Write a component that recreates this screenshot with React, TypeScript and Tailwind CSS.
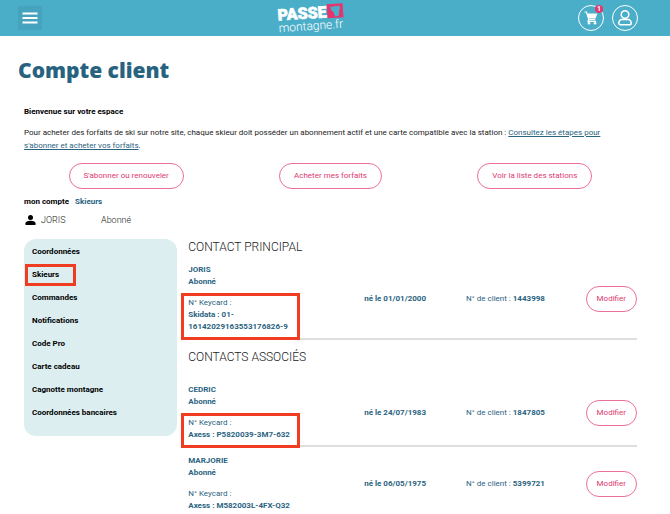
import type { ReactNode } from "react";

type Contact = {
  name: string;
  status: string;
  card: string;
  birth: string;
  client: string;
  framed: boolean;
};

const menu = [
  "Coordonnées",
  "Skieurs",
  "Commandes",
  "Notifications",
  "Code Pro",
  "Carte cadeau",
  "Cagnotte montagne",
  "Coordonnées bancaires",
];

const actions = ["S'abonner ou renouveler", "Acheter mes forfaits", "Voir la liste des stations"];

const mainContact: Contact = {
  name: "JORIS",
  status: "Abonné",
  card: "Skidata : 01-16142029163553176826-9",
  birth: "01/01/2000",
  client: "1443998",
  framed: true,
};

const linkedContacts: Contact[] = [
  {
    name: "CEDRIC",
    status: "Abonné",
    card: "Axess : P5820039-3M7-632",
    birth: "24/07/1983",
    client: "1847805",
    framed: true,
  },
  {
    name: "MARJORIE",
    status: "Abonné",
    card: "Axess : M582003L-4FX-Q32",
    birth: "06/05/1975",
    client: "5399721",
    framed: false,
  },
];

function Logo() {
  return (
    <svg width="70" height="34" viewBox="0 0 70 34" role="img" aria-label="PASSE montagne.fr">
      <g transform="rotate(-4 35 17)">
        <path d="M52.500 4.500h16v14h-16z" fill="#e5356f" />
        <path d="M56 7l2.500.6 1.500-.8 2 .3 2.500-.6 1.500 3-1.500 1.500v3l-1 3h-3.500l-1-4-2.500-2.500z" fill="#4baec9" />
        <text x="3" y="17.5" fill="#fff" stroke="#fff" strokeWidth="0.6" fontFamily="Roboto, sans-serif" fontWeight="900" fontSize="16">
          PASSE
        </text>
        <text x="3" y="29" fill="#fff" fontFamily="Roboto, sans-serif" fontWeight="300" fontSize="12">
          montagne.fr
        </text>
      </g>
    </svg>
  );
}

function CartIcon() {
  return (
    <svg width="14" height="14" viewBox="0 0 14 14" fill="none" aria-hidden="true">
      <path d="M0.5 1h2l2.3 7.6h6.4" stroke="#fff" strokeWidth="1.2" />
      <path d="M3 2.4h10.4l-1.9 5H4.6z" fill="#fff" />
      <path d="M4.8 8.4L4 10.3h8" stroke="#fff" strokeWidth="1.2" />
      <circle cx="5" cy="12.3" r="1.3" fill="#fff" />
      <circle cx="11" cy="12.3" r="1.3" fill="#fff" />
    </svg>
  );
}

function UserIcon() {
  return (
    <svg width="16" height="18" viewBox="0 0 16 18" fill="none" stroke="#fff" strokeWidth="1.5" aria-hidden="true">
      <circle cx="8" cy="5.5" r="3.8" />
      <path d="M4.6 10.6h6.8c1.6 0 2.8 1.6 2.8 3.3 0 1.1-.7 1.9-1.7 1.9h-9c-1 0-1.7-.8-1.7-1.9 0-1.7 1.2-3.3 2.8-3.3z" />
    </svg>
  );
}

function PillButton({ small, children }: { small?: boolean; children: ReactNode }) {
  return (
    <button
      type="button"
      className={`h-[26px] rounded-full border border-[#ec6f99] text-[#dd3a70] ${small ? "px-2.5" : "px-3.5"}`}
    >
      {children}
    </button>
  );
}

// Red frame laid over an item to point it out
function Frame({ className }: { className: string }) {
  return <span className={`pointer-events-none absolute border-3 border-[#f03c20] ${className}`} />;
}

function ContactRow({ contact }: { contact: Contact }) {
  return (
    <div className="grid grid-cols-[176fr_102fr_100fr_71fr] items-center text-[#2a637f]">
      <div className="w-28">
        <p className="font-bold">{contact.name}</p>
        <p className="font-bold">{contact.status}</p>
        <div className="relative mt-[9px]">
          <p>N° Keycard :</p>
          <p className="font-bold">{contact.card}</p>
          {contact.framed && <Frame className="-top-1 right-0 -bottom-[7px] -left-[7px]" />}
        </div>
      </div>
      <p className="font-bold">né le {contact.birth}</p>
      <p>
        N° de client : <b>{contact.client}</b>
      </p>
      <div className="text-right">
        <PillButton small>Modifier</PillButton>
      </div>
    </div>
  );
}

export default function App() {
  return (
    <div className="bg-white font-['Roboto',sans-serif] text-[8px] leading-3 text-[#222]">
      <header className="flex h-9 items-center justify-between bg-[#4baec9] pr-8 pl-[18px]">
        <button type="button" aria-label="Menu" className="flex size-6 items-center justify-center bg-[#46a3bd]">
          <svg width="16" height="12" viewBox="0 0 16 12" fill="#fff" aria-hidden="true">
            <path d="M0.5 0.5h15v2h-15zM0.5 5h15v2h-15zM0.5 9.5h15v2h-15z" />
          </svg>
        </button>
        <a href="#">
          <Logo />
        </a>
        <div className="flex gap-2">
          <a href="#" aria-label="Panier" className="relative flex size-[26px] items-center justify-center rounded-full border border-white">
            <CartIcon />
            <span className="absolute -top-px right-0 size-2 rounded-full bg-[#e5356f] text-center text-[7px] leading-2 font-bold text-white">
              1
            </span>
          </a>
          <a href="#" aria-label="Mon compte" className="flex size-[26px] items-center justify-center rounded-full border border-white">
            <UserIcon />
          </a>
        </div>
      </header>

      <h1 className="px-[18px] pt-5 font-['Noto_Sans',sans-serif] text-[21px] leading-7 font-black text-[#27637f]">
        Compte client
      </h1>

      <main className="pt-[22px] pr-[33px] pl-6">
        <p className="font-bold text-black">Bienvenue sur votre espace</p>
        <p className="mt-2 pr-4 leading-[13px]">
          Pour acheter des forfaits de ski sur notre site, chaque skieur doit posséder un abonnement actif et une carte
          compatible avec la station :{" "}
          <a href="#" className="text-[#2a637f] underline">
            Consultez les étapes pour s'abonner et acheter vos forfaits
          </a>
          .
        </p>

        <div className="mt-[11px] grid grid-cols-3 justify-items-center">
          {actions.map((label) => (
            <PillButton key={label}>{label}</PillButton>
          ))}
        </div>

        <p className="mt-[7px] flex gap-1.5 font-bold text-black">
          mon compte
          <a href="#" className="text-[#2a637f]">
            Skieurs
          </a>
        </p>
        <div className="mt-1.5 flex items-center text-[9px] font-light">
          <svg width="13" height="12" viewBox="0 0 13 12" aria-hidden="true">
            <circle cx="6.5" cy="3.5" r="2.5" />
            <path d="M1.500 11V9.300c0-1.800 3.300-2.500 5-2.500s5 .7 5 2.500V11z" />
          </svg>
          <span className="ml-1 w-[60px]">JORIS</span>
          <span>Abonné</span>
        </div>

        <div className="mt-[13px] flex items-start gap-[11px]">
          <nav className="flex h-[197px] w-1/4 flex-col rounded-xl bg-[#dceef0] px-2 pt-px pb-[11px] font-bold text-black">
            {menu.map((item) => (
              <a key={item} href="#" className="flex flex-1 items-center">
                <span className="relative">
                  {item}
                  {item === "Skieurs" && <Frame className="-top-[5px] -right-[17px] -bottom-[5px] -left-[7px]" />}
                </span>
              </a>
            ))}
          </nav>

          <div className="flex-1">
            <h2 className="text-xs leading-4 font-light">CONTACT PRINCIPAL</h2>
            <div className="mt-[9px] border-b-2 border-[#dedede] pb-[5px]">
              <ContactRow contact={mainContact} />
            </div>
            <h2 className="mt-[9px] text-xs leading-4 font-light">CONTACTS ASSOCIÉS</h2>
            <ul className="mt-[19px] space-y-2">
              {linkedContacts.map((c) => (
                <li key={c.name} className="border-b-2 border-[#dedede] pb-1 last:border-b-0">
                  <ContactRow contact={c} />
                </li>
              ))}
            </ul>
          </div>
        </div>
      </main>
    </div>
  );
}
